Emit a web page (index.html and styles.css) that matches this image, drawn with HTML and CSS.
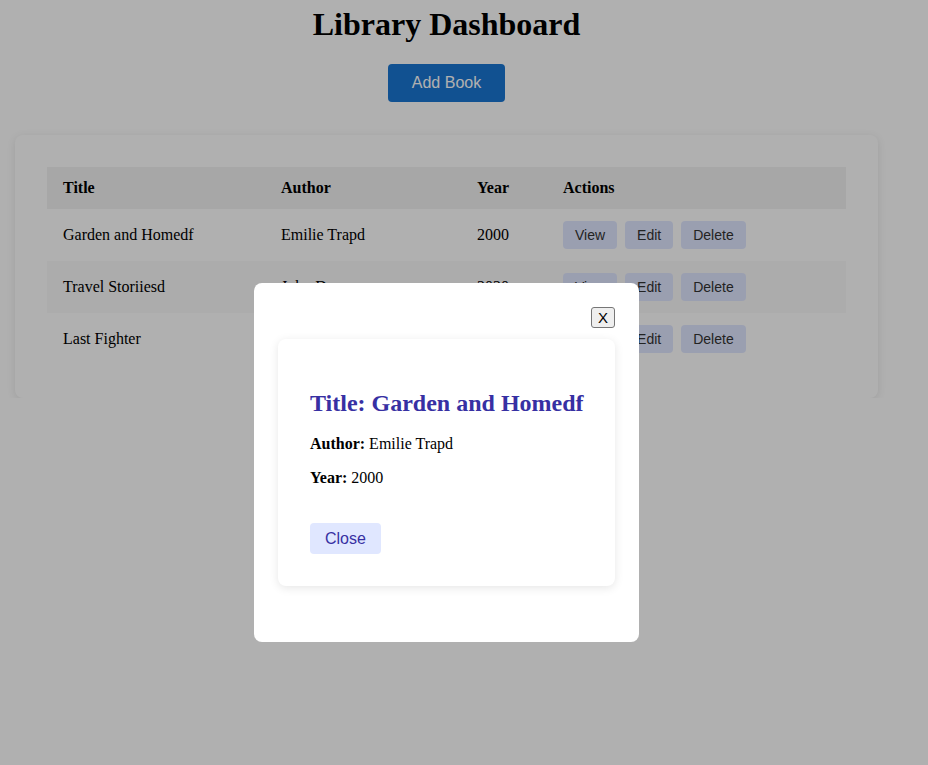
FILE: index.html
```html
<!DOCTYPE html>
<html lang="en">
<head>
<meta charset="utf-8">
<title>Library Dashboard</title>
<link rel="stylesheet" href="styles.css">
</head>
<body>
<div class="page">
  <h1 class="page-title">Library Dashboard</h1>
  <div class="toolbar">
    <button class="btn-primary">Add Book</button>
  </div>
  <div class="card">
    <table class="books">
      <thead>
        <tr>
          <th class="col-title">Title</th>
          <th class="col-author">Author</th>
          <th class="col-year">Year</th>
          <th class="col-actions">Actions</th>
        </tr>
      </thead>
      <tbody>
        <tr>
          <td>Garden and Homedf</td>
          <td>Emilie Trapd</td>
          <td>2000</td>
          <td><div class="actions"><button class="btn-small">View</button><button class="btn-small">Edit</button><button class="btn-small">Delete</button></div></td>
        </tr>
        <tr>
          <td>Travel Storiiesd</td>
          <td>John Doe</td>
          <td>2020</td>
          <td><div class="actions"><button class="btn-small">View</button><button class="btn-small">Edit</button><button class="btn-small">Delete</button></div></td>
        </tr>
        <tr>
          <td>Last Fighter</td>
          <td>Mark Lee</td>
          <td>2015</td>
          <td><div class="actions"><button class="btn-small">View</button><button class="btn-small">Edit</button><button class="btn-small">Delete</button></div></td>
        </tr>
      </tbody>
    </table>
  </div>
</div>

<div class="overlay">
  <div class="modal">
    <div class="modal-head">
      <button class="btn-x">X</button>
    </div>
    <div class="detail">
      <h2 class="detail-title">Title: Garden and Homedf</h2>
      <p class="detail-line"><strong>Author:</strong> Emilie Trapd</p>
      <p class="detail-line"><strong>Year:</strong> 2000</p>
      <button class="btn-close">Close</button>
    </div>
  </div>
</div>
</body>
</html>
```

FILE: styles.css
```css
html, body {
  margin: 0;
  padding: 0;
  background: #ffffff;
  font-family: "Liberation Serif", "Times New Roman", serif;
  color: #000;
}

.page {
  width: 863px;
  margin-left: 15px;
  padding-top: 6px;
}

.page-title {
  margin: 0 0 21px;
  font-size: 32px;
  font-weight: bold;
  text-align: center;
  line-height: 37px;
}

.toolbar {
  display: flex;
  justify-content: center;
  margin-bottom: 33px;
}

.btn-primary {
  font-family: "Liberation Sans", Arial, sans-serif;
  font-size: 16px;
  line-height: 18px;
  height: 38px;
  padding: 0 24px;
  background: #1976d2;
  color: #fff;
  border: none;
  border-radius: 4px;
}

.card {
  background: #fff;
  border-radius: 8px;
  box-shadow: 0 2px 8px rgba(0, 0, 0, 0.1);
  padding: 32px 32px 33px;
}

.books {
  width: 100%;
  border-collapse: collapse;
  font-size: 16px;
}

.books th,
.books td {
  text-align: left;
  padding: 12px 16px;
  line-height: 18px;
}

.books th {
  background: #f2f2f2;
  font-weight: bold;
}

.books tbody tr:nth-child(even) td {
  background: #f9f9f9;
}

.col-title { width: 186px; }
.col-author { width: 164px; }
.col-year { width: 54px; }

.actions {
  display: flex;
  gap: 8px;
}

.btn-small {
  font-family: "Liberation Sans", Arial, sans-serif;
  font-size: 14px;
  line-height: 16px;
  padding: 6px 12px;
  background: #e0e7ff;
  color: #333;
  border: none;
  border-radius: 4px;
}

.overlay {
  position: fixed;
  inset: 0;
  background: rgba(0, 0, 0, 0.31);
  display: flex;
  align-items: flex-start;
  justify-content: flex-start;
  padding: 283px 0 0 254px;
}

.modal {
  width: 337px;
  background: #fff;
  border-radius: 8px;
  padding: 24px;
  display: flex;
  flex-direction: column;
}

.modal-head {
  display: flex;
  justify-content: flex-end;
  margin-bottom: 11px;
}

.btn-x {
  font-family: "Liberation Sans", Arial, sans-serif;
  font-size: 15px;
  line-height: 15px;
  padding: 0;
  background: #efefef;
  color: #000;
  border: 1px solid #767676;
  border-radius: 3px;
  height: 21px;
  width: 24px;
  display: flex;
  align-items: center;
  justify-content: center;
}

.detail {
  background: #fff;
  border-radius: 8px;
  box-shadow: 0 2px 10px rgba(0, 0, 0, 0.1);
  padding: 32px;
  margin-bottom: 32px;
}

.detail-title {
  margin: 18px 0 18px;
  font-size: 24px;
  line-height: 28px;
  color: #3730a3;
  font-weight: bold;
  white-space: nowrap;
}

.detail-line {
  margin: 0 0 16px;
  font-size: 16px;
  line-height: 18px;
}

.btn-close {
  margin-top: 20px;
  font-family: "Liberation Sans", Arial, sans-serif;
  font-size: 16px;
  line-height: 19px;
  padding: 6px 15px;
  background: #e0e7ff;
  color: #3730a3;
  border: none;
  border-radius: 4px;
}
```
